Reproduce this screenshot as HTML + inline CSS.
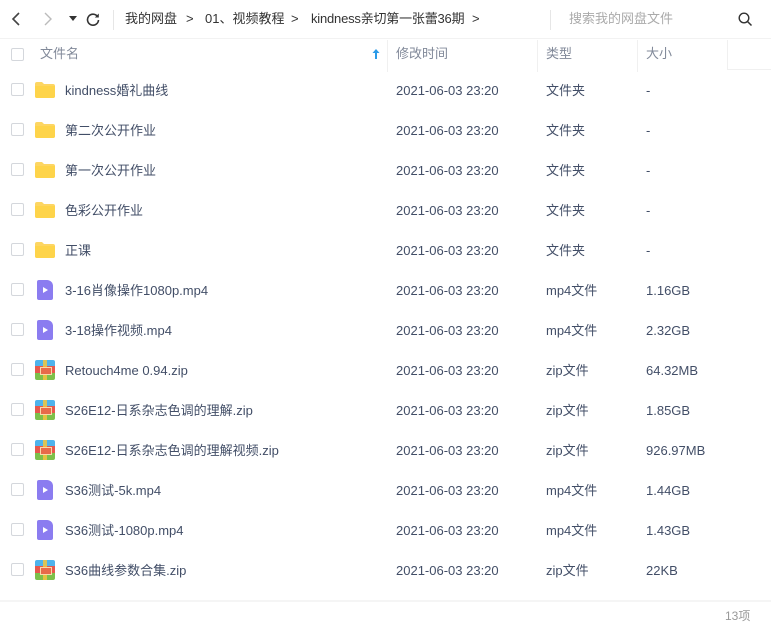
<!DOCTYPE html>
<html><head><meta charset="utf-8"><style>
*{margin:0;padding:0;box-sizing:border-box}
body{width:771px;height:631px;background:#fff;font-family:"Liberation Sans","Noto Sans CJK SC",sans-serif;color:#424e67;font-size:13px;position:relative;overflow:hidden}
.abs{position:absolute;white-space:nowrap}
.cb{position:absolute;left:11px;width:13px;height:13px;border:1px solid #d4d7dc;border-radius:2px;background:#fff}
.row{position:absolute;left:0;width:771px;height:40px}
.row .t{position:absolute;top:13px;line-height:16px}
.folder{position:absolute;left:35px;top:12px;width:20px;height:16px}
.vid{position:absolute;left:37px;top:10px;width:16px;height:20px;background:#8b7cf0;border-radius:2px 6px 2px 2px}
.vid:after{content:"";position:absolute;left:6px;top:7px;border-left:5px solid #fff;border-top:3px solid transparent;border-bottom:3px solid transparent}
.zip{position:absolute;left:35px;top:10px;width:20px;height:20px;background:linear-gradient(#4fb3ec 0 30%,#e8574c 30% 65%,#7cc04a 65%);border-radius:2px}
.zip:before{content:"";position:absolute;left:8px;top:0;width:4px;height:20px;background:#f3c63d;opacity:.85}
.zip:after{content:"";position:absolute;left:5px;top:7px;width:10px;height:6px;border:1.5px solid #f7d9a8;background:#e66a4a}
.bc{position:absolute;top:11px;line-height:16px;color:#333;white-space:nowrap}
</style></head><body>
<svg class="abs" style="left:10px;top:11px" width="14" height="16"><path d="M9 2 L3 8 L9 14" fill="none" stroke="#444" stroke-width="1.6"/></svg>
<svg class="abs" style="left:41px;top:11px" width="14" height="16"><path d="M4 2 L10 8 L4 14" fill="none" stroke="#bbb" stroke-width="1.4"/></svg>
<svg class="abs" style="left:69px;top:16px" width="8" height="6"><path d="M0 0 L8 0 L4 5Z" fill="#333"/></svg>
<svg class="abs" style="left:86px;top:12px" width="14" height="14"><path d="M11.5 4.5 A5.5 5.5 0 1 0 12.5 8" fill="none" stroke="#333" stroke-width="1.6"/><path d="M12.8 1.5 L12.8 5.5 L8.8 5.5Z" fill="#333"/></svg>
<div class="abs" style="left:113px;top:10px;width:1px;height:20px;background:#e6e6e6"></div>
<div class="bc" style="left:125px">我的网盘</div>
<div class="bc" style="left:186px">&gt;</div>
<div class="bc" style="left:205px">01、视频教程</div>
<div class="bc" style="left:291px">&gt;</div>
<div class="bc" style="left:311px;letter-spacing:-0.2px">kindness亲切第一张蕾36期</div>
<div class="bc" style="left:472px">&gt;</div>
<div class="abs" style="left:550px;top:10px;width:1px;height:20px;background:#e6e6e6"></div>
<div class="abs" style="left:569px;top:11px;line-height:16px;color:#aaa">搜索我的网盘文件</div>
<svg class="abs" style="left:738px;top:12px" width="15" height="15"><circle cx="6" cy="6" r="4.8" fill="none" stroke="#333" stroke-width="1.4"/><path d="M9.5 9.5 L13.5 13.5" stroke="#333" stroke-width="1.5"/></svg>
<div class="abs" style="left:0;top:38px;width:771px;height:1px;background:#f2f2f2"></div>
<div class="cb" style="top:48px"></div>
<div class="abs" style="left:40px;top:46px;line-height:16px;color:#818999">文件名</div>
<svg class="abs" style="left:372px;top:48px" width="8" height="12"><path d="M4 1 L7.5 5 L5 5 L5 11 L3 11 L3 5 L0.5 5Z" fill="#2b9be8"/></svg>
<div class="abs" style="left:387px;top:40px;width:1px;height:32px;background:#f0f0f0"></div>
<div class="abs" style="left:396px;top:46px;line-height:16px;color:#818999">修改时间</div>
<div class="abs" style="left:537px;top:40px;width:1px;height:32px;background:#f0f0f0"></div>
<div class="abs" style="left:546px;top:46px;line-height:16px;color:#818999">类型</div>
<div class="abs" style="left:637px;top:40px;width:1px;height:32px;background:#f0f0f0"></div>
<div class="abs" style="left:646px;top:46px;line-height:16px;color:#818999">大小</div>
<div class="abs" style="left:727px;top:40px;width:1px;height:30px;background:#f0f0f0"></div>
<div class="abs" style="left:727px;top:69px;width:44px;height:1px;background:#f0f0f0"></div>

<div class="row" style="top:70px"><div class="cb" style="top:13px"></div><div class="folder"><svg width="20" height="16"><path d="M0 2 Q0 0 2 0 L7 0 L9 2 L18 2 Q20 2 20 4 L20 14 Q20 16 18 16 L2 16 Q0 16 0 14Z" fill="#fdd663"/><path d="M0 4 L20 4 L20 14 Q20 16 18 16 L2 16 Q0 16 0 14Z" fill="#fed44a"/></svg></div><div class="t" style="left:65px">kindness婚礼曲线</div><div class="t" style="left:396px">2021-06-03 23:20</div><div class="t" style="left:546px">文件夹</div><div class="t" style="left:646px">-</div></div>
<div class="row" style="top:110px"><div class="cb" style="top:13px"></div><div class="folder"><svg width="20" height="16"><path d="M0 2 Q0 0 2 0 L7 0 L9 2 L18 2 Q20 2 20 4 L20 14 Q20 16 18 16 L2 16 Q0 16 0 14Z" fill="#fdd663"/><path d="M0 4 L20 4 L20 14 Q20 16 18 16 L2 16 Q0 16 0 14Z" fill="#fed44a"/></svg></div><div class="t" style="left:65px">第二次公开作业</div><div class="t" style="left:396px">2021-06-03 23:20</div><div class="t" style="left:546px">文件夹</div><div class="t" style="left:646px">-</div></div>
<div class="row" style="top:150px"><div class="cb" style="top:13px"></div><div class="folder"><svg width="20" height="16"><path d="M0 2 Q0 0 2 0 L7 0 L9 2 L18 2 Q20 2 20 4 L20 14 Q20 16 18 16 L2 16 Q0 16 0 14Z" fill="#fdd663"/><path d="M0 4 L20 4 L20 14 Q20 16 18 16 L2 16 Q0 16 0 14Z" fill="#fed44a"/></svg></div><div class="t" style="left:65px">第一次公开作业</div><div class="t" style="left:396px">2021-06-03 23:20</div><div class="t" style="left:546px">文件夹</div><div class="t" style="left:646px">-</div></div>
<div class="row" style="top:190px"><div class="cb" style="top:13px"></div><div class="folder"><svg width="20" height="16"><path d="M0 2 Q0 0 2 0 L7 0 L9 2 L18 2 Q20 2 20 4 L20 14 Q20 16 18 16 L2 16 Q0 16 0 14Z" fill="#fdd663"/><path d="M0 4 L20 4 L20 14 Q20 16 18 16 L2 16 Q0 16 0 14Z" fill="#fed44a"/></svg></div><div class="t" style="left:65px">色彩公开作业</div><div class="t" style="left:396px">2021-06-03 23:20</div><div class="t" style="left:546px">文件夹</div><div class="t" style="left:646px">-</div></div>
<div class="row" style="top:230px"><div class="cb" style="top:13px"></div><div class="folder"><svg width="20" height="16"><path d="M0 2 Q0 0 2 0 L7 0 L9 2 L18 2 Q20 2 20 4 L20 14 Q20 16 18 16 L2 16 Q0 16 0 14Z" fill="#fdd663"/><path d="M0 4 L20 4 L20 14 Q20 16 18 16 L2 16 Q0 16 0 14Z" fill="#fed44a"/></svg></div><div class="t" style="left:65px">正课</div><div class="t" style="left:396px">2021-06-03 23:20</div><div class="t" style="left:546px">文件夹</div><div class="t" style="left:646px">-</div></div>
<div class="row" style="top:270px"><div class="cb" style="top:13px"></div><div class="vid"></div><div class="t" style="left:65px">3-16肖像操作1080p.mp4</div><div class="t" style="left:396px">2021-06-03 23:20</div><div class="t" style="left:546px">mp4文件</div><div class="t" style="left:646px">1.16GB</div></div>
<div class="row" style="top:310px"><div class="cb" style="top:13px"></div><div class="vid"></div><div class="t" style="left:65px">3-18操作视频.mp4</div><div class="t" style="left:396px">2021-06-03 23:20</div><div class="t" style="left:546px">mp4文件</div><div class="t" style="left:646px">2.32GB</div></div>
<div class="row" style="top:350px"><div class="cb" style="top:13px"></div><div class="zip"></div><div class="t" style="left:65px">Retouch4me 0.94.zip</div><div class="t" style="left:396px">2021-06-03 23:20</div><div class="t" style="left:546px">zip文件</div><div class="t" style="left:646px">64.32MB</div></div>
<div class="row" style="top:390px"><div class="cb" style="top:13px"></div><div class="zip"></div><div class="t" style="left:65px">S26E12-日系杂志色调的理解.zip</div><div class="t" style="left:396px">2021-06-03 23:20</div><div class="t" style="left:546px">zip文件</div><div class="t" style="left:646px">1.85GB</div></div>
<div class="row" style="top:430px"><div class="cb" style="top:13px"></div><div class="zip"></div><div class="t" style="left:65px">S26E12-日系杂志色调的理解视频.zip</div><div class="t" style="left:396px">2021-06-03 23:20</div><div class="t" style="left:546px">zip文件</div><div class="t" style="left:646px">926.97MB</div></div>
<div class="row" style="top:470px"><div class="cb" style="top:13px"></div><div class="vid"></div><div class="t" style="left:65px">S36测试-5k.mp4</div><div class="t" style="left:396px">2021-06-03 23:20</div><div class="t" style="left:546px">mp4文件</div><div class="t" style="left:646px">1.44GB</div></div>
<div class="row" style="top:510px"><div class="cb" style="top:13px"></div><div class="vid"></div><div class="t" style="left:65px">S36测试-1080p.mp4</div><div class="t" style="left:396px">2021-06-03 23:20</div><div class="t" style="left:546px">mp4文件</div><div class="t" style="left:646px">1.43GB</div></div>
<div class="row" style="top:550px"><div class="cb" style="top:13px"></div><div class="zip"></div><div class="t" style="left:65px">S36曲线参数合集.zip</div><div class="t" style="left:396px">2021-06-03 23:20</div><div class="t" style="left:546px">zip文件</div><div class="t" style="left:646px">22KB</div></div>

<div class="abs" style="left:0;top:600px;width:771px;height:2px;background:#f5f5f5"></div>
<div class="abs" style="left:725px;top:608px;line-height:16px;color:#999;font-size:12px">13项</div>
</body></html>
